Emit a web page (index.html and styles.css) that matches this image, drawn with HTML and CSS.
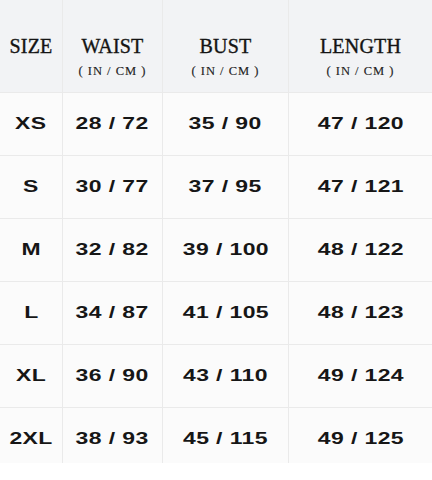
FILE: index.html
```html
<!DOCTYPE html>
<html>
<head>
<meta charset="utf-8">
<link rel="stylesheet" href="styles.css">
</head>
<body>
<div class="chart">
  <div class="head"><span class="title">SIZE</span></div>
  <div class="head"><span class="title">WAIST</span><span class="unit">( IN / CM )</span></div>
  <div class="head"><span class="title">BUST</span><span class="unit">( IN / CM )</span></div>
  <div class="head"><span class="title">LENGTH</span><span class="unit">( IN / CM )</span></div>

  <div class="cell"><span class="val">XS</span></div>
  <div class="cell"><span class="val">28 / 72</span></div>
  <div class="cell"><span class="val">35 / 90</span></div>
  <div class="cell"><span class="val">47 / 120</span></div>

  <div class="cell"><span class="val">S</span></div>
  <div class="cell"><span class="val">30 / 77</span></div>
  <div class="cell"><span class="val">37 / 95</span></div>
  <div class="cell"><span class="val">47 / 121</span></div>

  <div class="cell"><span class="val">M</span></div>
  <div class="cell"><span class="val">32 / 82</span></div>
  <div class="cell"><span class="val">39 / 100</span></div>
  <div class="cell"><span class="val">48 / 122</span></div>

  <div class="cell"><span class="val">L</span></div>
  <div class="cell"><span class="val">34 / 87</span></div>
  <div class="cell"><span class="val">41 / 105</span></div>
  <div class="cell"><span class="val">48 / 123</span></div>

  <div class="cell"><span class="val">XL</span></div>
  <div class="cell"><span class="val">36 / 90</span></div>
  <div class="cell"><span class="val">43 / 110</span></div>
  <div class="cell"><span class="val">49 / 124</span></div>

  <div class="cell last"><span class="val">2XL</span></div>
  <div class="cell last"><span class="val">38 / 93</span></div>
  <div class="cell last"><span class="val">45 / 115</span></div>
  <div class="cell last"><span class="val">49 / 125</span></div>
</div>
</body>
</html>
```
FILE: styles.css
```css
html, body {
  margin: 0;
  padding: 0;
  background: #ffffff;
}
.chart {
  width: 432px;
  display: grid;
  grid-template-columns: 62px 99px 125px 1fr;
  grid-template-rows: 92px repeat(5, 62px) 55px;
  gap: 1px;
  background: #eaeaea;
}
.head {
  background: #f2f3f5;
  display: flex;
  flex-direction: column;
  align-items: center;
  padding-top: 36px;
  box-sizing: border-box;
  color: #141414;
  font-family: "Liberation Serif", "Times New Roman", serif;
}
.title {
  font-size: 20px;
  line-height: 20px;
  letter-spacing: 0.2px;
  -webkit-text-stroke: 0.35px #141414;
}
.unit {
  font-size: 12.5px;
  line-height: 12px;
  letter-spacing: 1px;
  margin-top: 9px;
  color: #1e1e1e;
  -webkit-text-stroke: 0.15px #1e1e1e;
}
.cell {
  background: #fbfbfb;
  display: flex;
  align-items: center;
  justify-content: center;
  color: #161616;
  font-family: "Liberation Sans", Arial, sans-serif;
  font-weight: bold;
  font-size: 17px;
}
.cell.last {
  align-items: flex-start;
  padding-top: 21px;
  box-sizing: border-box;
}
.val {
  display: inline-block;
  transform: scaleX(1.35);
  letter-spacing: 0.3px;
  line-height: 20px;
}
```
